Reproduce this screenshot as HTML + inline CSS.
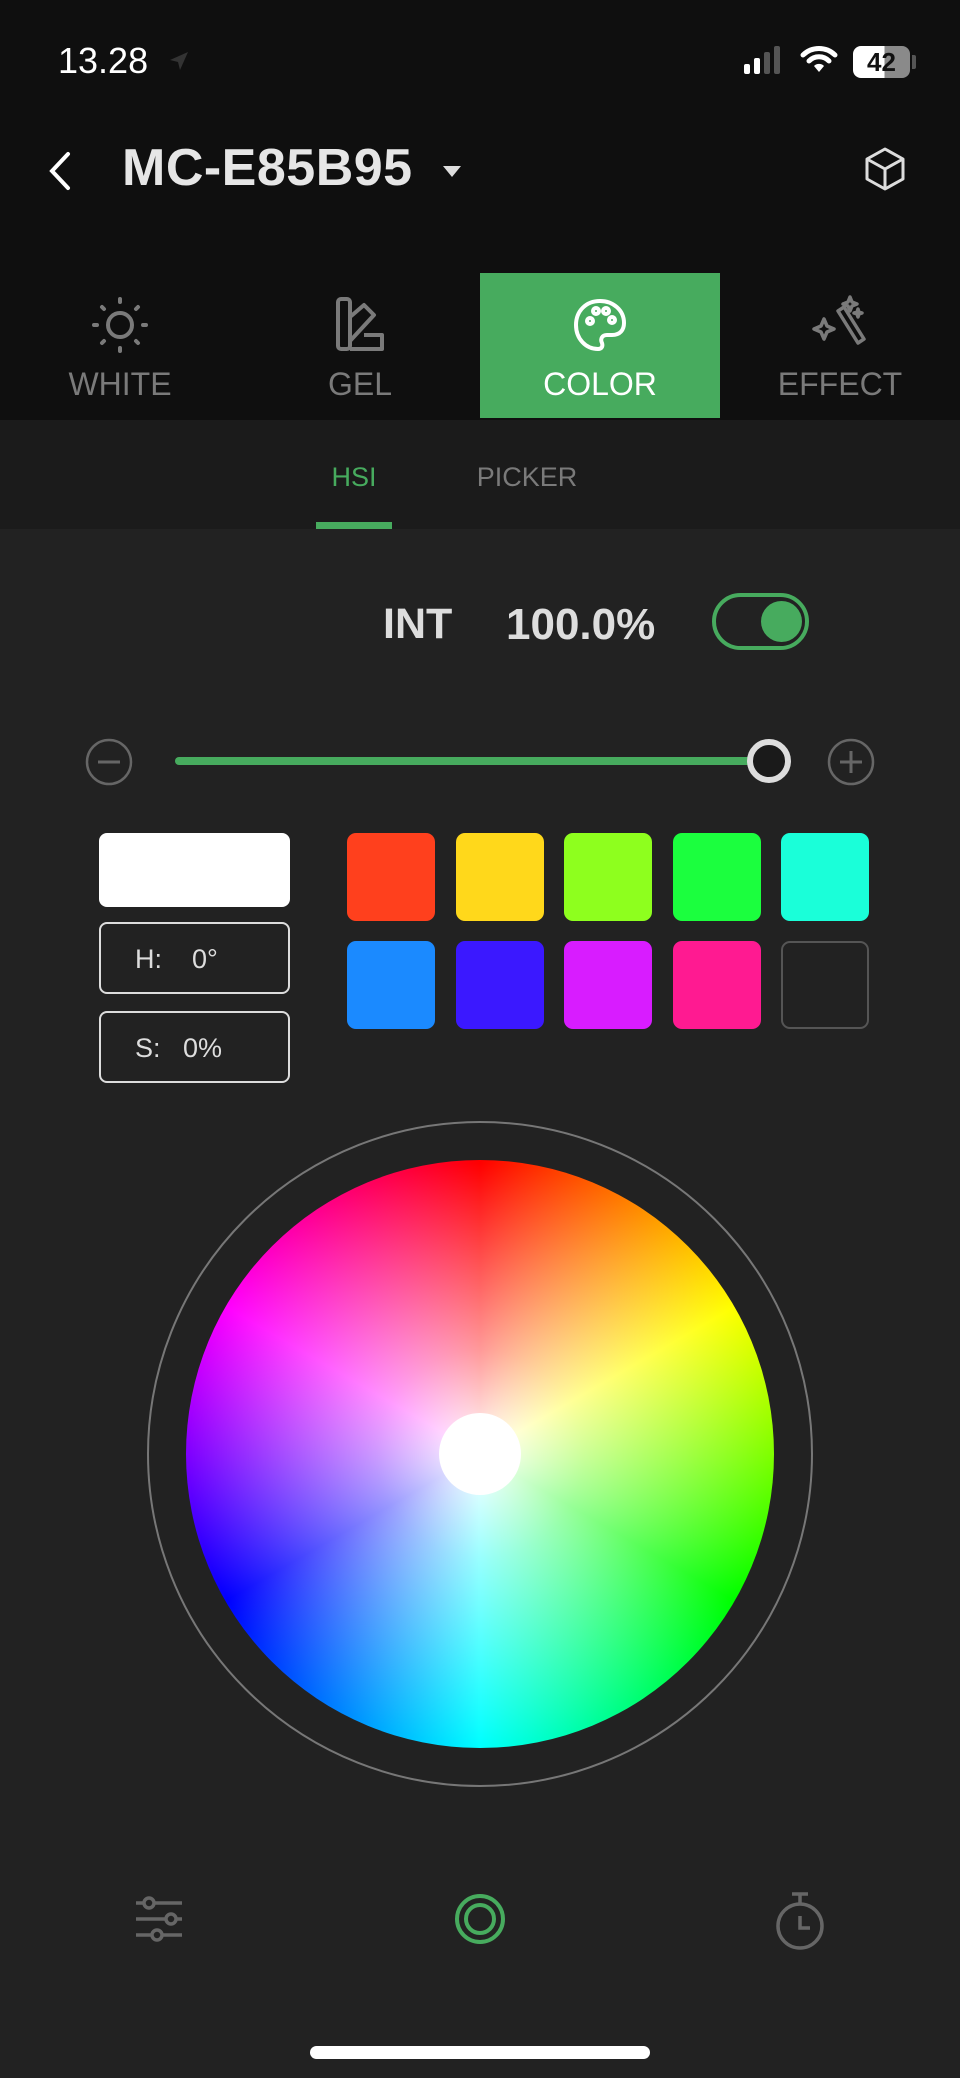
<!DOCTYPE html>
<html><head><meta charset="utf-8"><style>
*{margin:0;padding:0;box-sizing:border-box}
body{width:960px;height:2078px;background:#222;font-family:"Liberation Sans",sans-serif;position:relative;overflow:hidden}
.a{position:absolute}
.top{left:0;top:0;width:960px;height:420px;background:#0f0f0f}
.sub{left:0;top:420px;width:960px;height:109px;background:#1b1b1b}
.tl{font-size:32px;color:#7a7a7a;width:240px;text-align:center;top:366px}
.sw{width:88px;height:88px;border-radius:9px}
</style></head><body>
<div class="a top"></div>
<div class="a sub"></div>
<div class="a" style="left:58px;top:40px;font-size:36px;color:#fff;font-weight:500">13.28</div>
<svg class="a" style="left:168px;top:50px" width="22" height="22" viewBox="0 0 22 22"><path d="M20 2L2 10l8 2 2 8z" fill="#333"/></svg>
<svg class="a" style="left:742px;top:44px" width="40" height="32"><rect x="2" y="20" width="6" height="10" rx="2" fill="#fff"/><rect x="12" y="14" width="6" height="16" rx="2" fill="#fff"/><rect x="22" y="8" width="6" height="22" rx="2" fill="#555"/><rect x="32" y="2" width="6" height="28" rx="2" fill="#555"/></svg>
<svg class="a" style="left:800px;top:44px" width="38" height="30" viewBox="0 0 38 30"><path d="M3 11a23 23 0 0 1 32 0" stroke="#fff" stroke-width="5" fill="none" stroke-linecap="round"/><path d="M9 17a14 14 0 0 1 20 0" stroke="#fff" stroke-width="5" fill="none" stroke-linecap="round"/><path d="M14 22l5 6 5-6a7 7 0 0 0-10 0z" fill="#fff"/></svg>
<div class="a" style="left:853px;top:46px;width:57px;height:32px;border-radius:8px;background:linear-gradient(90deg,#fff 0 55%,#8a8a8a 55%)"></div>
<div class="a" style="left:853px;top:46px;width:57px;height:32px;font-size:26px;font-weight:bold;color:#111;text-align:center;line-height:32px">42</div>
<div class="a" style="left:912px;top:55px;width:4px;height:14px;background:#555;border-radius:0 2px 2px 0"></div>
<svg class="a" style="left:44px;top:150px" width="32" height="42"><path d="M24 4L8 21l16 17" stroke="#fff" stroke-width="4" fill="none" stroke-linecap="round"/></svg>
<div class="a" style="left:122px;top:138px;font-size:52px;font-weight:bold;color:#e6e6e6;letter-spacing:0.5px">MC-E85B95</div>
<svg class="a" style="left:442px;top:164px" width="20" height="14"><path d="M1 2h18L10 13z" fill="#ddd"/></svg>
<svg class="a" style="left:862px;top:146px" width="46" height="46" viewBox="0 0 46 46"><path d="M23 3L41 13v20L23 43 5 33V13z M5 13l18 10 18-10 M23 23v20" stroke="#ddd" stroke-width="3" fill="none" stroke-linejoin="round"/></svg>
<div class="a" style="left:480px;top:273px;width:240px;height:145px;background:#47ab5e"></div>
<svg class="a" style="left:90px;top:295px" width="60" height="60" viewBox="0 0 60 60"><g stroke="#7a7a7a" stroke-width="4" fill="none" stroke-linecap="round"><circle cx="30" cy="30" r="12"/><path d="M30 4v3M30 53v3M4 30h3M53 30h3M12 12l2 2M46 46l2 2M12 48l2-2M46 14l2-2"/></g></svg>
<svg class="a" style="left:330px;top:295px" width="60" height="60" viewBox="0 0 60 60"><g stroke="#7a7a7a" stroke-width="4" fill="none" stroke-linejoin="round"><rect x="8" y="4" width="12" height="50" rx="3"/><path d="M20 22l14-12 10 10-24 26M20 54h32V40H34"/></g></svg>
<svg class="a" style="left:570px;top:295px" width="60" height="60" viewBox="0 0 60 60"><g stroke="#fff" stroke-width="4" fill="none"><path d="M30 6C16 6 6 16 6 30s10 24 22 24c4 0 5-3 4-6-2-4 0-8 5-8h5c8 0 12-5 12-12C54 15 43 6 30 6z"/><circle cx="20" cy="26" r="3"/><circle cx="26" cy="16" r="3"/><circle cx="36" cy="16" r="3"/><circle cx="42" cy="25" r="3"/></g></svg>
<svg class="a" style="left:810px;top:295px" width="60" height="60" viewBox="0 0 60 60"><g stroke="#7a7a7a" stroke-width="3.5" fill="none" stroke-linejoin="round"><path d="M28 16l6-4 20 32-6 4z"/><path d="M14 24l3 7 7 3-7 3-3 7-3-7-7-3 7-3z"/><path d="M40 2l2 5 5 2-5 2-2 5-2-5-5-2 5-2z"/><path d="M48 14l1 3 3 1-3 1-1 3-1-3-3-1 3-1z"/></g></svg>
<div class="a tl" style="left:0">WHITE</div>
<div class="a tl" style="left:240px">GEL</div>
<div class="a tl" style="left:480px;color:#fff">COLOR</div>
<div class="a tl" style="left:720px">EFFECT</div>
<div class="a" style="left:316px;top:462px;width:76px;text-align:center;font-size:27px;color:#47ab5e">HSI</div>
<div class="a" style="left:470px;top:462px;width:114px;text-align:center;font-size:27px;color:#7a7a7a">PICKER</div>
<div class="a" style="left:316px;top:522px;width:76px;height:7px;background:#47ab5e"></div>
<div class="a" style="left:383px;top:600px;font-size:43px;font-weight:bold;color:#ddd">INT</div>
<div class="a" style="left:506px;top:600px;font-size:44px;font-weight:bold;color:#ddd">100.0%</div>
<div class="a" style="left:712px;top:593px;width:97px;height:57px;border:4px solid #47ab5e;border-radius:29px"></div>
<div class="a" style="left:761px;top:601px;width:41px;height:41px;border-radius:50%;background:#47ab5e"></div>
<svg class="a" style="left:84px;top:737px" width="50" height="50"><circle cx="25" cy="25" r="22" stroke="#666" stroke-width="2.5" fill="none"/><path d="M14 25h22" stroke="#666" stroke-width="3"/></svg>
<svg class="a" style="left:826px;top:737px" width="50" height="50"><circle cx="25" cy="25" r="22" stroke="#666" stroke-width="2.5" fill="none"/><path d="M14 25h22M25 14v22" stroke="#666" stroke-width="3"/></svg>
<div class="a" style="left:175px;top:757px;width:594px;height:8px;border-radius:4px;background:#47ab5e"></div>
<div class="a" style="left:747px;top:739px;width:44px;height:44px;border-radius:50%;background:#1a1a1a;border:6px solid #ddd"></div>
<div class="a" style="left:99px;top:833px;width:191px;height:74px;background:#fff;border-radius:8px"></div>
<div class="a" style="left:99px;top:922px;width:191px;height:72px;border:2px solid #ddd;border-radius:8px;color:#ddd;font-size:27px;padding:20px 0 0 34px">H:&nbsp;&nbsp;&nbsp;&nbsp;0°</div>
<div class="a" style="left:99px;top:1011px;width:191px;height:72px;border:2px solid #ddd;border-radius:8px;color:#ddd;font-size:27px;padding:20px 0 0 34px">S:&nbsp;&nbsp;&nbsp;0%</div>
<div class="a sw" style="left:347px;top:833px;background:#ff401d"></div>
<div class="a sw" style="left:456px;top:833px;background:#ffd81b"></div>
<div class="a sw" style="left:564px;top:833px;background:#8eff1e"></div>
<div class="a sw" style="left:673px;top:833px;background:#1bff3e"></div>
<div class="a sw" style="left:781px;top:833px;background:#1affd9"></div>
<div class="a sw" style="left:347px;top:941px;background:#1b8aff"></div>
<div class="a sw" style="left:456px;top:941px;background:#3b18ff"></div>
<div class="a sw" style="left:564px;top:941px;background:#d81cff"></div>
<div class="a sw" style="left:673px;top:941px;background:#ff1a91"></div>
<div class="a sw" style="left:781px;top:941px;border:2px solid #555"></div>
<div class="a" style="left:147px;top:1121px;width:666px;height:666px;border-radius:50%;border:2px solid #777"></div>
<div class="a" style="left:186px;top:1160px;width:588px;height:588px;border-radius:50%;background:radial-gradient(circle,#fff 0%,rgba(255,255,255,.6) 25%,rgba(255,255,255,0) 70%),conic-gradient(#f00,#ff0 60deg,#0f0 120deg,#0ff 180deg,#00f 240deg,#f0f 300deg,#f00)"></div>
<div class="a" style="left:439px;top:1413px;width:82px;height:82px;border-radius:50%;background:#fff"></div>
<svg class="a" style="left:134px;top:1894px" width="50" height="50" viewBox="0 0 50 50"><g stroke="#666" stroke-width="3.5" fill="#222"><path d="M2 9h46M2 25h46M2 41h46"/><circle cx="15" cy="9" r="5"/><circle cx="37" cy="25" r="5"/><circle cx="23" cy="41" r="5"/></g></svg>
<svg class="a" style="left:454px;top:1893px" width="52" height="52"><circle cx="26" cy="26" r="23" stroke="#47ab5e" stroke-width="4" fill="none"/><circle cx="26" cy="26" r="14" stroke="#47ab5e" stroke-width="4" fill="none"/></svg>
<svg class="a" style="left:774px;top:1890px" width="52" height="62"><g stroke="#666" stroke-width="3.5" fill="none"><circle cx="26" cy="36" r="22"/><path d="M18 4h16M26 4v10M26 26v12h10"/></g></svg>
<div class="a" style="left:310px;top:2046px;width:340px;height:13px;border-radius:7px;background:#fff"></div>
</body></html>
